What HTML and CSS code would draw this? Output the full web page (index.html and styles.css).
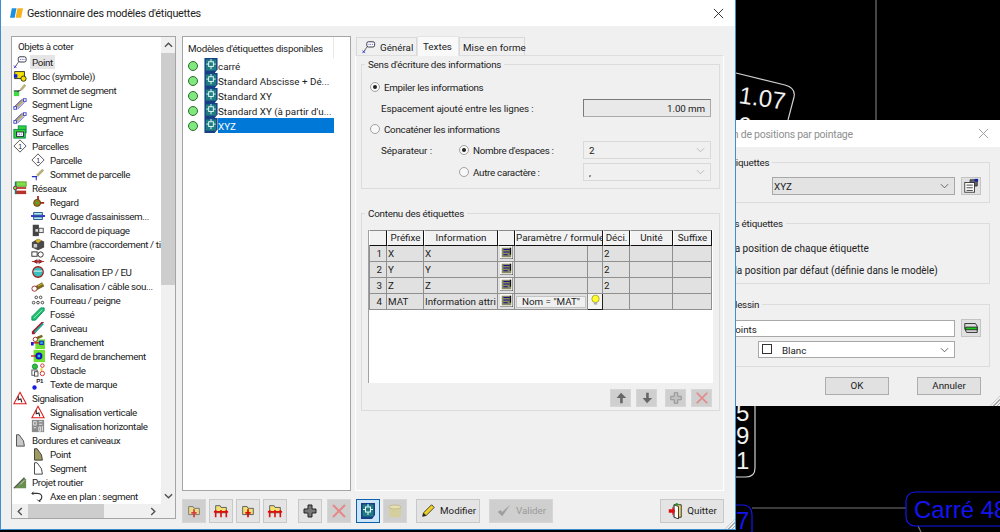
FILE: index.html
```html
<!DOCTYPE html>
<html lang="fr">
<head>
<meta charset="utf-8">
<title>Gestionnaire des modèles d'étiquettes</title>
<link rel="stylesheet" href="styles.css">
</head>
<body>
<svg class="sprite" width="0" height="0" aria-hidden="true">
  <symbol id="i-point" viewBox="0 0 16 16"><path d="M2 14 L7 7" stroke="#555" fill="none"/><path d="M1 12l3 3M4 12l-3 3" stroke="#3a3ad0"/><rect x="6" y="2" width="9" height="6" rx="2" fill="#fff" stroke="#223"/><path d="M8 5h5" stroke="#3a3ad0" stroke-dasharray="1 1"/></symbol>
  <symbol id="i-bloc" viewBox="0 0 16 16"><rect x="2" y="3" width="11" height="8" fill="#f6e200" stroke="#222"/><rect x="1" y="6" width="4" height="4" fill="#1020e0"/><circle cx="12" cy="11" r="3" fill="#f6e200" stroke="#222"/></symbol>
  <symbol id="i-sommet" viewBox="0 0 16 16"><rect x="1" y="9" width="6" height="6" fill="#3fdc3f"/><path d="M5 10 L9 8" stroke="#223" /><path d="M9 8 L14 2" stroke="#b8b078" stroke-width="3"/><path d="M1 9h6" stroke="#223"/></symbol>
  <symbol id="i-ligne" viewBox="0 0 16 16"><path d="M2 13 L12 3" stroke="#b8b078" stroke-width="4"/><path d="M2 11 L10 3M5 14 L13 6" stroke="#3a3ad0"/><rect x="1" y="11" width="3" height="3" fill="#fff" stroke="#3a3ad0"/><rect x="12" y="2" width="3" height="3" fill="#fff" stroke="#3a3ad0"/></symbol>
  <symbol id="i-surface" viewBox="0 0 16 16"><rect x="6" y="1" width="9" height="8" fill="#35d435" stroke="#085"/><rect x="1" y="5" width="13" height="10" fill="#35d435" stroke="#085"/><rect x="4" y="8" width="8" height="5" fill="#fff" stroke="#223"/><path d="M5 10.500h6" stroke="#33c" stroke-dasharray="1 1"/></symbol>
  <symbol id="i-spar" viewBox="0 0 16 16"><path d="M1 11h6M6 11v4" stroke="#2030c0" stroke-width="1.200"/><path d="M7 10 L14 3" stroke="#b8b078" stroke-width="3"/></symbol>
  <symbol id="i-reseau" viewBox="0 0 16 16"><rect x="3" y="1" width="12" height="5" fill="#7de04a" stroke="#592"/><rect x="3" y="7" width="12" height="2" fill="#b8322a"/><rect x="3" y="11" width="12" height="4" fill="#b8322a"/><rect x="2" y="1" width="2" height="14" fill="#2a7a7a"/><circle cx="2.500" cy="8" r="2" fill="#7de04a" stroke="#824"/></symbol>
  <symbol id="i-regard" viewBox="0 0 16 16"><path d="M8 1v6M9 9h6" stroke="#b02020" stroke-width="2"/><circle cx="7" cy="9" r="4" fill="#a07a10" stroke="#504010"/><circle cx="7" cy="9" r="1.500" fill="#3cb040"/></symbol>
  <symbol id="i-ouvrage" viewBox="0 0 16 16"><path d="M0 8h16" stroke="#1a1ae0" stroke-width="2"/><path d="M3 4h10v3H3zM3 9h10v3H3z" fill="#aaf0f0" stroke="#204080"/></symbol>
  <symbol id="i-raccord" viewBox="0 0 16 16"><rect x="2" y="2" width="7" height="13" fill="#444"/><rect x="9" y="6" width="5" height="5" fill="#eee" stroke="#444"/><path d="M5 7h3v3H5z" fill="#ddd"/></symbol>
  <symbol id="i-chambre" viewBox="0 0 16 16"><path d="M1 6 L8 2 L15 5 V12 L8 15 L1 12Z" fill="#4a4a4a"/><path d="M5 4.500 L8 2 L12 4 L8 7Z" fill="#d8b020"/><rect x="3" y="8" width="4" height="4" fill="#ccc"/></symbol>
  <symbol id="i-access" viewBox="0 0 16 16"><rect x="1" y="1" width="6" height="5" fill="#fff" stroke="#222"/><circle cx="11" cy="4" r="3" fill="#fff" stroke="#222"/><path d="M3 12l4 2v-4zM13 12l-4 2v-4z" fill="#d8a020" stroke="#602"/><path d="M1 12h14" stroke="#b02020"/></symbol>
  <symbol id="i-canal" viewBox="0 0 16 16"><circle cx="8" cy="8" r="6" fill="#38c0c0" stroke="#a02020" stroke-width="1.500"/><path d="M3 7h10" stroke="#fff" stroke-width="1"/></symbol>
  <symbol id="i-cable" viewBox="0 0 16 16"><path d="M5 11 L14 6" stroke="#7a6a20" stroke-width="5"/><path d="M8 8 L14 5" stroke="#e0c840" stroke-width="1"/><circle cx="4" cy="11" r="3" fill="#fff" stroke="#a02020"/></symbol>
  <symbol id="i-fourreau" viewBox="0 0 16 16"><g fill="none" stroke="#333"><circle cx="6" cy="5" r="1.500"/><circle cx="11" cy="5" r="1.500"/><circle cx="3" cy="11" r="1.500"/><circle cx="8" cy="11" r="1.500"/><circle cx="13" cy="11" r="1.500"/></g></symbol>
  <symbol id="i-fosse" viewBox="0 0 16 16"><path d="M1 11 L11 1 H15 V4 L5 15 H1Z" fill="#20c070" stroke="#086"/><path d="M3 13 L13 3" stroke="#9af0b0"/></symbol>
  <symbol id="i-caniveau" viewBox="0 0 16 16"><path d="M1 12 L12 1 H15 L4 15 H1Z" fill="#a02030"/><path d="M4 13 L14 3" stroke="#20b0a0" stroke-width="2"/></symbol>
  <symbol id="i-branch" viewBox="0 0 16 16"><rect x="5" y="5" width="11" height="11" fill="#6ee030"/><path d="M6 4 L13 1" stroke="#7a6a20" stroke-width="3"/><circle cx="5" cy="5" r="2.500" fill="#fff" stroke="#a02020"/><path d="M0 9h14" stroke="#e01010" stroke-width="1.500"/><rect x="0" y="8" width="3" height="4" fill="#1a1ae0"/><rect x="10" y="7" width="4" height="4" fill="#20b0e0" stroke="#11c"/></symbol>
  <symbol id="i-rbranch" viewBox="0 0 16 16"><rect x="3" y="1" width="13" height="14" fill="#6ee030"/><path d="M0 8h6" stroke="#e01010" stroke-width="1.500"/><circle cx="9" cy="8" r="4" fill="#1010c0"/><rect x="7.500" y="6.500" width="3" height="3" fill="#20d0e0"/></symbol>
  <symbol id="i-obst" viewBox="0 0 16 16"><circle cx="4.500" cy="4" r="3" fill="#30c030" stroke="#185"/><rect x="1" y="8" width="6" height="6" fill="#fff" stroke="#444"/><rect x="4" y="10" width="4" height="5" fill="#fff" stroke="#444"/><circle cx="13" cy="3" r="2" fill="#fff" stroke="#d02020"/><circle cx="13" cy="12" r="2.500" fill="#fff" stroke="#d02020"/><path d="M12 6v3" stroke="#e8d000" stroke-width="2"/></symbol>
  <symbol id="i-sign" viewBox="0 0 16 16"><path d="M8 1.500 L15 14.500 H1Z" fill="#fff" stroke="#e01818" stroke-width="1.200"/><path d="M6 6 L6 10 L9 9 L10 13" fill="none" stroke="#222" stroke-width="1.300"/></symbol>
  <symbol id="i-shor" viewBox="0 0 16 16"><rect x="1" y="1" width="14" height="14" fill="#8a8a8a"/><path d="M3 3h3v4H3zM9 3h4M9 6h4M3 10h3M9 9h2v5H9zM13 8v6" fill="none" stroke="#eee"/></symbol>
  <symbol id="i-bord" viewBox="0 0 16 16"><path d="M4 2h3l5 7 1 6H4Z" fill="#c8c8c8" stroke="#444"/></symbol>
  <symbol id="i-bpoint" viewBox="0 0 16 16"><path d="M4 2h3l5 7 1 6H4Z" fill="#a09a60" stroke="#333"/></symbol>
  <symbol id="i-bseg" viewBox="0 0 16 16"><path d="M4 2h3l5 7 1 6H4Z" fill="#fff" stroke="#333"/></symbol>
  <symbol id="i-route" viewBox="0 0 16 16"><path d="M1 15 L13 3 L15 5 V15Z" fill="#6a9050"/><path d="M1 15 L13 3" stroke="#555" stroke-width="1.500"/><path d="M8 11 L13 6" stroke="#ddd"/></symbol>
  <symbol id="i-axe" viewBox="0 0 16 16"><path d="M1 5h6c5 0 6 3 5 6l-3 3" fill="none" stroke="#333" stroke-width="1.300"/><path d="M3 3l-2 2 2 2M7 12l2 2 2 0" fill="none" stroke="#333"/></symbol>
  <symbol id="i-chip" viewBox="0 0 14 16"><path d="M0 0h14v12l-3 4H0Z" fill="#173f86"/><rect x="1.500" y="1.500" width="11" height="12" fill="#1f7d82"/><rect x="4.500" y="4" width="5" height="5" fill="none" stroke="#e8fbfb"/><path d="M7 1v3M7 9v3M2 6.500h2.500M9.500 6.500H12" stroke="#e8fbfb"/></symbol>
  <symbol id="i-fold" viewBox="0 0 18 18"><path d="M3 4h5l1 2h6v7H3Z" fill="#f2e070" stroke="#555"/><path d="M9 7v9M6 11h6" stroke="#d81010" stroke-width="2"/></symbol>
  <symbol id="i-folds" viewBox="0 0 18 18"><path d="M3 3h5l1 2h6v6H3Z" fill="#f2e070" stroke="#555"/><path d="M1 10h16M3 8v8M9 8v8M15 8v8" stroke="#d81010" stroke-width="1.800"/></symbol>
  <symbol id="i-plus" viewBox="0 0 16 16"><path d="M6 2h4v4h4v4h-4v4H6v-4H2V6h4Z" fill="#777" stroke="#222"/></symbol>
  <symbol id="i-x" viewBox="0 0 16 16"><path d="M2 2 L14 14 M14 2 L2 14" stroke="#ee7070" stroke-width="2"/></symbol>
  <symbol id="i-disk" viewBox="0 0 16 16"><path d="M2 4v9c0 2 12 2 12 0V4Z" fill="#d8d090"/><ellipse cx="8" cy="4" rx="6" ry="2" fill="#eee5a8" stroke="#bdb57a"/></symbol>
  <symbol id="i-pencil" viewBox="0 0 18 18"><path d="M3 15 L4 11 L13 2 L16 5 L7 14Z" fill="#f0d020" stroke="#333"/><path d="M3 15l1-4 3 3Z" fill="#222"/></symbol>
  <symbol id="i-check" viewBox="0 0 18 18"><path d="M2 10 L7 15 L16 2 L7 10 L5 8Z" fill="#8f8f8f"/></symbol>
  <symbol id="i-quit" viewBox="0 0 18 18"><path d="M8 2h8v14H8Z" fill="#f6e070" stroke="#222"/><path d="M8 2l5 2v14l-5-2Z" fill="#fff" stroke="#222"/><path d="M1 7h4V4l3 5-3 5v-3H1Z" fill="#e01010" transform="translate(1 0)"/><circle cx="11" cy="1.500" r="1.500" fill="#20a020"/></symbol>
  <symbol id="i-up" viewBox="0 0 16 16"><path d="M8 2 L14 8 H10 V14 H7 V8 H3Z" fill="#444"/></symbol>
  <symbol id="i-down" viewBox="0 0 16 16"><path d="M8 14 L14 8 H10 V2 H7 V8 H3Z" fill="#444"/></symbol>
  <symbol id="i-plusg" viewBox="0 0 16 16"><path d="M6 2h4v4h4v4h-4v4H6v-4H2V6h4Z" fill="#bbb" stroke="#777"/></symbol>
  <symbol id="i-info" viewBox="0 0 15 15"><rect width="15" height="15" fill="#f8f8f8"/><rect x="2" y="2" width="11" height="11" fill="#8a8a60"/><path d="M4 4h7M4 7h7M4 10h5" stroke="#101090" stroke-width="1.200"/><path d="M12 2v8" stroke="#111" stroke-width="1.500"/><path d="M15 0v15H0" stroke="#222" fill="none"/></symbol>
  <symbol id="i-bulb" viewBox="0 0 14 16"><circle cx="7" cy="6" r="4.500" fill="#ffff30" stroke="#a09a20"/><rect x="5" y="10" width="4" height="3" fill="#aaa"/></symbol>
  <symbol id="i-form" viewBox="0 0 20 18"><rect x="3" y="5" width="11" height="11" fill="#fff" stroke="#333"/><path d="M5 8h7M5 11h7M5 14h7" stroke="#333"/><path d="M9 2h8v7h-3V5H9Z" fill="#667" stroke="#333"/><rect x="14" y="1" width="4" height="3" fill="#1020a0"/></symbol>
  <symbol id="i-layer" viewBox="0 0 20 18"><path d="M3 4h12l2 3v7H5L3 10Z" fill="#ddd" stroke="#222"/><path d="M4 8h13v3H4Z" fill="#18d018" stroke="#222"/></symbol>
</svg>

<div class="desktop">
  <svg class="cad" viewBox="0 0 1000 532" width="1000" height="532">
    <path d="M876 0V120" stroke="#8a8a8a"/>
    <path d="M736 73 L785 85 Q796 88 794 97 L788 120" fill="none" stroke="#cfcfcf" stroke-width="1.200"/>
    <text class="cad-white" x="738" y="103" transform="rotate(8 738 103)">1.07</text>
    <text class="cad-white" x="737" y="133" transform="rotate(8 737 133)">9.29</text>
    <path d="M755 400V468Q755 477 746 477H736" fill="none" stroke="#cfcfcf" stroke-width="1.200"/>
    <text class="cad-white" x="736" y="421">5</text>
    <text class="cad-white" x="736" y="444">9</text>
    <text class="cad-white" x="736" y="469">1</text>
    <path d="M752 508H906M918 526l3 6" stroke="#777" stroke-width="1.200" fill="none"/>
    <path d="M736 505H742Q752 505 752 515V532" fill="none" stroke="#1414ee" stroke-width="1.200"/>
    <text class="cad-blue" x="736" y="529">7</text>
    <rect x="906" y="492" width="120" height="34" rx="9" fill="none" stroke="#1414ee" stroke-width="1.200"/>
    <text class="cad-blue" x="914" y="518">Carré 48</text>
  </svg>

  <section class="window back">
    <header class="titlebar inactive"><span class="title-text">Création de positions par pointage</span><svg class="close" viewBox="0 0 12 12"><path d="M1 1 L11 11M11 1 L1 11"/></svg></header>
    <div class="back-body">
      <fieldset class="group"><legend>Modèle d'étiquettes</legend>
        <div class="row-end">
          <div class="select grey w183"><b>XYZ</b><svg class="chev" viewBox="0 0 10 6"><path d="M1 1l4 4 4-4"/></svg></div>
          <button class="side-btn"><svg viewBox="0 0 20 18"><use href="#i-form"/></svg></button>
        </div>
      </fieldset>
      <fieldset class="group"><legend>Position des étiquettes</legend>
        <div class="back-rows">
          <label class="radio-row"><span class="radio"></span>Définir la position de chaque étiquette</label>
          <label class="radio-row"><span class="radio"></span>Utiliser la position par défaut (définie dans le modèle)</label>
        </div>
      </fieldset>
      <fieldset class="group"><legend>Calque du dessin</legend>
        <div class="layer-rows">
          <div class="row-end">
            <div class="text-field w265">Calque points</div>
            <button class="side-btn"><svg viewBox="0 0 20 18"><use href="#i-layer"/></svg></button>
          </div>
          <div class="row-end">
            <div class="select white w197"><span class="swatch"></span><span>Blanc</span><svg class="chev" viewBox="0 0 10 6"><path d="M1 1l4 4 4-4"/></svg></div>
            <span class="side-space"></span>
          </div>
        </div>
      </fieldset>
      <div class="back-actions"><button class="push">OK</button><button class="push">Annuler</button></div>
    </div>
    <span class="grip"></span>
  </section>

  <section class="window main">
    <header class="titlebar">
      <svg class="logo" viewBox="0 0 14 10"><path d="M2 0h5L5 10H0Z" fill="#1b8fe0"/><path d="M8 0h6l-2 10H6Z" fill="#f6b31c"/></svg>
      <span class="title-text">Gestionnaire des modèles d'étiquettes</span>
      <svg class="close dark" viewBox="0 0 12 12"><path d="M1 1 L11 11M11 1 L1 11"/></svg>
    </header>
    <div class="main-body">
      <div class="tree-panel">
        <div class="tree">
          <div class="tree-head">Objets à coter</div>
          <ul class="tree-list">
            <li class="l0"><svg><use href="#i-point"/></svg><span class="hl">Point</span></li>
            <li class="l0"><svg><use href="#i-bloc"/></svg><span>Bloc (symbole))</span></li>
            <li class="l0"><svg><use href="#i-sommet"/></svg><span>Sommet de segment</span></li>
            <li class="l0"><svg><use href="#i-ligne"/></svg><span>Segment Ligne</span></li>
            <li class="l0"><svg><use href="#i-ligne"/></svg><span>Segment Arc</span></li>
            <li class="l0"><svg><use href="#i-surface"/></svg><span>Surface</span></li>
            <li class="l0"><svg viewBox="0 0 16 16"><path d="M8 1 L15 8 L8 15 L1 8Z" fill="#fff" stroke="#444"/><text class="ico-num" x="8" y="11">1</text></svg><span>Parcelles</span></li>
            <li class="l1"><svg viewBox="0 0 16 16"><path d="M8 1 L15 8 L8 15 L1 8Z" fill="#fff" stroke="#444"/><text class="ico-num" x="8" y="11">1</text></svg><span>Parcelle</span></li>
            <li class="l1"><svg><use href="#i-spar"/></svg><span>Sommet de parcelle</span></li>
            <li class="l0"><svg><use href="#i-reseau"/></svg><span>Réseaux</span></li>
            <li class="l1"><svg><use href="#i-regard"/></svg><span>Regard</span></li>
            <li class="l1"><svg><use href="#i-ouvrage"/></svg><span>Ouvrage d'assainissem...</span></li>
            <li class="l1"><svg><use href="#i-raccord"/></svg><span>Raccord de piquage</span></li>
            <li class="l1"><svg><use href="#i-chambre"/></svg><span>Chambre (raccordement / tirage)</span></li>
            <li class="l1"><svg><use href="#i-access"/></svg><span>Accessoire</span></li>
            <li class="l1"><svg><use href="#i-canal"/></svg><span>Canalisation EP / EU</span></li>
            <li class="l1"><svg><use href="#i-cable"/></svg><span>Canalisation / câble sou...</span></li>
            <li class="l1"><svg><use href="#i-fourreau"/></svg><span>Fourreau / peigne</span></li>
            <li class="l1"><svg><use href="#i-fosse"/></svg><span>Fossé</span></li>
            <li class="l1"><svg><use href="#i-caniveau"/></svg><span>Caniveau</span></li>
            <li class="l1"><svg><use href="#i-branch"/></svg><span>Branchement</span></li>
            <li class="l1"><svg><use href="#i-rbranch"/></svg><span>Regard de branchement</span></li>
            <li class="l1"><svg><use href="#i-obst"/></svg><span>Obstacle</span></li>
            <li class="l1"><svg viewBox="0 0 16 16"><circle cx="4" cy="12" r="2.500" fill="#1a1ae0"/><text class="ico-mark" x="6" y="7">P1</text></svg><span>Texte de marque</span></li>
            <li class="l0"><svg><use href="#i-sign"/></svg><span>Signalisation</span></li>
            <li class="l1"><svg><use href="#i-sign"/></svg><span>Signalisation verticale</span></li>
            <li class="l1"><svg><use href="#i-shor"/></svg><span>Signalisation horizontale</span></li>
            <li class="l0"><svg><use href="#i-bord"/></svg><span>Bordures et caniveaux</span></li>
            <li class="l1"><svg><use href="#i-bpoint"/></svg><span>Point</span></li>
            <li class="l1"><svg><use href="#i-bseg"/></svg><span>Segment</span></li>
            <li class="l0"><svg><use href="#i-route"/></svg><span>Projet routier</span></li>
            <li class="l1"><svg><use href="#i-axe"/></svg><span>Axe en plan : segment</span></li>
          </ul>
        </div>
        <div class="vscroll">
          <svg class="arrow" viewBox="0 0 10 6"><path d="M1 5l4-4 4 4"/></svg>
          <div class="vtrack"><div class="vthumb"></div></div>
          <svg class="arrow" viewBox="0 0 10 6"><path d="M1 1l4 4 4-4"/></svg>
        </div>
        <div class="hscroll">
          <svg class="arrow-h" viewBox="0 0 6 10"><path d="M5 1L1 5l4 4"/></svg>
          <div class="htrack"><div class="hthumb"></div></div>
          <svg class="arrow-h" viewBox="0 0 6 10"><path d="M1 1l4 4-4 4"/></svg>
        </div>
        <div class="corner"></div>
      </div>

      <div class="work">
        <div class="work-top">
          <div class="models">
            <div class="models-inner">
              <div class="models-head">Modèles d'étiquettes disponibles</div>
              <div class="model"><span class="dot"></span><svg class="chip"><use href="#i-chip"/></svg><span class="model-name">carré</span></div>
              <div class="model"><span class="dot"></span><svg class="chip"><use href="#i-chip"/></svg><span class="model-name">Standard Abscisse + Dé...</span></div>
              <div class="model"><span class="dot"></span><svg class="chip"><use href="#i-chip"/></svg><span class="model-name">Standard XY</span></div>
              <div class="model"><span class="dot"></span><svg class="chip"><use href="#i-chip"/></svg><span class="model-name">Standard XY (à partir d'u...</span></div>
              <div class="model selected"><span class="dot"></span><svg class="chip"><use href="#i-chip"/></svg><span class="model-name">XYZ</span></div>
            </div>
          </div>

          <div class="tabs">
            <div class="tab-strip">
              <div class="tab w-general"><svg class="tab-ico"><use href="#i-point"/></svg>Général</div>
              <div class="tab active w-textes">Textes</div>
              <div class="tab w-forme">Mise en forme</div>
            </div>
            <div class="tab-panel">
              <fieldset class="group"><legend>Sens d'écriture des informations</legend>
                <div class="sens">
                  <label class="radio-row"><span class="radio on"></span>Empiler les informations</label>
                  <div class="sub-row"><span>Espacement ajouté entre les lignes :</span><div class="num-field">1.00 mm</div></div>
                  <label class="radio-row"><span class="radio"></span>Concaténer les informations</label>
                  <div class="sub-row"><span class="sep-label">Séparateur :</span><label class="radio-row sep-radio"><span class="radio on"></span>Nombre d'espaces :</label><div class="select pale"><span>2</span><svg class="chev light" viewBox="0 0 10 6"><path d="M1 1l4 4 4-4"/></svg></div></div>
                  <div class="sub-row tight"><span class="sep-label"></span><label class="radio-row sep-radio"><span class="radio"></span>Autre caractère :</label><div class="select pale"><span>,</span><svg class="chev light" viewBox="0 0 10 6"><path d="M1 1l4 4 4-4"/></svg></div></div>
                </div>
              </fieldset>
              <fieldset class="group second"><legend>Contenu des étiquettes</legend>
                <div class="grid-wrap">
                  <table class="grid">
                    <colgroup><col class="c18"><col class="c37"><col class="c74"><col class="c17"><col class="c73"><col class="c15"><col class="c27"><col class="c43"><col class="c39"></colgroup>
                    <thead><tr><th></th><th>Préfixe</th><th>Information</th><th></th><th colspan="2">Paramètre / formule</th><th>Déci.</th><th>Unité</th><th>Suffixe</th></tr></thead>
                    <tbody>
                      <tr><td class="num">1</td><td>X</td><td>X</td><td class="ic"><svg><use href="#i-info"/></svg></td><td></td><td></td><td>2</td><td></td><td></td></tr>
                      <tr><td class="num">2</td><td>Y</td><td>Y</td><td class="ic"><svg><use href="#i-info"/></svg></td><td></td><td></td><td>2</td><td></td><td></td></tr>
                      <tr><td class="num">3</td><td>Z</td><td>Z</td><td class="ic"><svg><use href="#i-info"/></svg></td><td></td><td></td><td>2</td><td></td><td></td></tr>
                      <tr><td class="num">4</td><td>MAT</td><td>Information attri</td><td class="ic"><svg><use href="#i-info"/></svg></td><td class="formula"><span>Nom = "MAT"</span></td><td class="ic bulb"><svg><use href="#i-bulb"/></svg></td><td></td><td></td><td></td></tr>
                    </tbody>
                  </table>
                </div>
                <div class="grid-tools">
                  <button class="tbtn off small"><svg><use href="#i-up"/></svg></button>
                  <button class="tbtn off small"><svg><use href="#i-down"/></svg></button>
                  <button class="tbtn off small push-left"><svg><use href="#i-plusg"/></svg></button>
                  <button class="tbtn off small"><svg><use href="#i-x"/></svg></button>
                </div>
              </fieldset>
            </div>
          </div>
        </div>

        <div class="toolbar">
          <div class="tool-group">
            <button class="tbtn off"><svg><use href="#i-fold"/></svg></button>
            <button class="tbtn"><svg><use href="#i-folds"/></svg></button>
            <button class="tbtn"><svg><use href="#i-fold"/></svg></button>
            <button class="tbtn"><svg><use href="#i-folds"/></svg></button>
          </div>
          <div class="tool-group wide">
            <button class="tbtn"><svg><use href="#i-plus"/></svg></button>
            <button class="tbtn off"><svg><use href="#i-x"/></svg></button>
          </div>
          <div class="tool-group narrow">
            <button class="tbtn pressed"><svg><use href="#i-chip"/></svg></button>
            <button class="tbtn off"><svg><use href="#i-disk"/></svg></button>
          </div>
          <button class="tbtn label"><svg><use href="#i-pencil"/></svg>Modifier</button>
          <button class="tbtn label off dim"><svg><use href="#i-check"/></svg>Valider</button>
          <button class="tbtn label quit"><svg><use href="#i-quit"/></svg>Quitter</button>
        </div>
      </div>
    </div>
    <span class="grip"></span>
  </section>
</div>
</body>
</html>
```

FILE: styles.css
```css
* { box-sizing: border-box; }
html, body { margin: 0; padding: 0; }
body { width: 1000px; height: 532px; overflow: hidden; background: #000; font: 9.800px/14px Roboto, sans-serif; color: #222; }
.sprite { position: absolute; }
.desktop { position: relative; width: 1000px; height: 532px; overflow: hidden; }
.cad { position: absolute; left: 0; top: 0; }
.cad-white { fill: #f0f0f0; font: 24px "Liberation Sans", sans-serif; }
.cad-blue { fill: #1414ee; font: 24px "Liberation Sans", sans-serif; }
.ico-num { font: 8px "Liberation Sans", sans-serif; text-anchor: middle; fill: #224; }
.ico-mark { font: 700 7px "Liberation Sans", sans-serif; fill: #222; }

.window { position: absolute; background: #f0f0f0; }
.main { left: 0; top: 0; width: 736px; height: 530px; border: 1px solid #3d8fd0; border-top: 0; }
.back { left: 671px; top: 120px; width: 329px; height: 286px; }

.titlebar { display: flex; align-items: center; height: 26px; background: #fff; padding: 2px 11px 0 26px; font-size: 10.800px; letter-spacing: -0.25px; position: relative; }
.titlebar.inactive { height: 27px; color: #8f8f8f; padding-left: 30px; justify-content: space-between; font-size: 10.500px; }
.logo { width: 13px; height: 10px; position: absolute; left: 9px; top: 8px; }
.close { width: 11px; height: 11px; fill: none; stroke: #999; stroke-width: 1; margin-top: -2px; }
.close.dark { stroke: #222; margin-left: auto; }
.grip { position: absolute; right: 0; bottom: 0; width: 10px; height: 10px; background: repeating-linear-gradient(135deg, transparent 0 1.5px, #a8a8a8 1.5px 2.5px); clip-path: polygon(100% 0, 100% 100%, 0 100%); }

.main-body { display: flex; gap: 6px; padding: 10px 10px 0; }

.tree-panel { width: 165px; height: 483px; border: 1px solid #a5a5a5; display: grid; grid-template-columns: 149px 14px; grid-template-rows: 467px 14px; background: #f0f0f0; }
.tree { background: #fff; overflow: hidden; letter-spacing: -0.38px; }
.tree-head { height: 18px; line-height: 20px; padding-left: 6px; }
.tree-list { list-style: none; margin: 0; padding: 0; }
.tree-list li { display: flex; align-items: flex-start; height: 14px; line-height: 16px; white-space: nowrap; }
.tree-list svg { width: 14px; height: 14px; flex: none; margin-right: 5px; overflow: visible; }
.tree-list .l0 { padding-left: 1px; }
.tree-list .l1 { padding-left: 19px; }
.hl { background: #e5e5e5; margin-left: -2px; padding: 0 2px; height: 14px; }

.vscroll { display: flex; flex-direction: column; align-items: center; background: #f0f0f0; }
.arrow { width: 9px; height: 16px; padding: 5px 0; flex: none; fill: none; stroke: #505050; stroke-width: 1.500; }
.vtrack { flex: 1; width: 100%; }
.vthumb { height: 232px; background: #cdcdcd; }
.hscroll { display: flex; align-items: center; background: #f0f0f0; }
.arrow-h { width: 16px; height: 9px; flex: none; fill: none; stroke: #505050; stroke-width: 1.500; }
.htrack { flex: 1; height: 100%; }
.hthumb { width: 76px; height: 100%; background: #cdcdcd; }
.corner { background: #f0f0f0; }

.work { width: 542px; display: flex; flex-direction: column; }
.work-top { display: flex; gap: 4px; height: 455px; }
.models { width: 169px; background: #fff; border: 1px solid #a5a5a5; }
.models-inner { width: 151px; }
.models-head { height: 21px; line-height: 23px; padding-left: 5px; white-space: nowrap; border-right: 1px solid #e8e8e8; letter-spacing: -0.25px; }
.model { display: flex; align-items: flex-start; height: 15px; white-space: nowrap; }
.dot { width: 10px; height: 10px; border-radius: 50%; background: #7fe87f; border: 1px solid #2d6a2d; margin: 3px 0 0 5px; flex: none; }
.chip { width: 14px; height: 15px; margin-left: 6px; flex: none; }
.model-name { flex: 1; height: 15px; line-height: 17px; }
.selected .model-name { background: #0078d7; color: #fff; }

.tabs { width: 369px; display: flex; flex-direction: column; }
.tab-strip { display: flex; height: 19px; padding-left: 1px; position: relative; z-index: 1; }
.tab { height: 18px; margin-top: 1px; padding-top: 2px; border: 1px solid #d9d9d9; border-bottom: 0; background: #f0f0f0; display: flex; align-items: center; padding-left: 21px; white-space: nowrap; }
.tab.active { height: 20px; margin-top: 0; background: #f9f9f9; padding-left: 5px; padding-top: 0; border-color: #e4e4e4; }
.w-general { width: 61px; padding-left: 4px; }
.tab-ico { width: 15px; height: 14px; margin: -2px 4px 0 0; flex: none; }
.w-textes { width: 42px; }
.tab.w-forme { width: 66px; padding-left: 3px; }
.tab-panel { height: 436px; border: 1px solid #fff; border-top-color: #dedede; padding: 1px 3px 0 5px; }

.group { margin: 0; padding: 0; border: 1px solid #dcdcdc; min-width: 0; }
.group legend { padding: 0 3px; margin-left: 3px; height: 14px; line-height: 16px; white-space: nowrap; letter-spacing: -0.22px; }
.group.second { margin-top: 17px; padding: 10px 6px 3px; }
.group.second legend { margin-left: -3px; }

.sens { display: flex; flex-direction: column; gap: 3px; padding: 7px 8px 7px 8px; }
.sens .radio-row { letter-spacing: -0.28px; }
.radio-row { display: flex; align-items: flex-start; height: 18px; line-height: 20px; white-space: nowrap; }
.radio { width: 10px; height: 10px; flex: none; border-radius: 50%; border: 1px solid #a2a2a2; background: #f8f8f8; margin: 4px 4px 0 0; position: relative; }
.radio.on::after { content: ""; position: absolute; left: 2px; top: 2px; width: 4px; height: 4px; border-radius: 50%; background: #222; }
.sub-row { display: flex; align-items: flex-start; height: 18px; line-height: 20px; padding-left: 11px; white-space: nowrap; letter-spacing: -0.11px; }
.sub-row.tight { margin-top: 1px; }
.sep-label { width: 78px; flex: none; }
.sep-radio { width: 124px; flex: none; }
.num-field { margin-left: auto; width: 128px; height: 18px; border: 1px solid #7a7a7a; border-right-color: #aaa; border-bottom-color: #aaa; background: #e9e9e9; text-align: right; padding-right: 5px; line-height: 18px; }

.select { display: flex; align-items: flex-start; height: 18px; line-height: 18px; border: 1px solid #c8c8c8; position: relative; padding-left: 5px; }
.select .chev { position: absolute; right: 5px; top: 5px; }
.chev { width: 9px; height: 6px; fill: none; stroke: #555; stroke-width: 1; }
.chev.light { stroke: #b5b5b5; }
.select.pale { width: 128px; margin-left: auto; background: #f0f0f0; border-color: #d9d9d9; }
.select.grey { background: #e3e3e3; border-color: #a8a8a8; padding-left: 1px; }
.select.grey b { font-weight: 400; }
.select.white { background: #fff; border-color: #a8a8a8; padding-left: 3px; height: 17px; line-height: 17px; }
.w183 { width: 183px; }
.w197 { width: 197px; }
.w265 { width: 265px; }
.swatch { width: 10px; height: 10px; border: 1px solid #333; background: #fff; margin: 2px 10px 0 0; }

.grid-wrap { height: 153px; background: #fff; border-left: 1px solid #a0a0a0; }
.grid { border-collapse: separate; border-spacing: 0; table-layout: fixed; width: 343px; }
.c18 { width: 18px; } .c37 { width: 37px; } .c74 { width: 74px; } .c17 { width: 17px; }
.c73 { width: 73px; } .c15 { width: 15px; } .c27 { width: 27px; } .c43 { width: 43px; } .c39 { width: 39px; }
.grid th { height: 16px; font-weight: 400; background: #f2f2f2; border: 1px solid #888; border-top-color: #8a8a8a; border-left-color: #fff; border-right: 1px solid #111; border-bottom: 1px solid #111; padding: 0; white-space: nowrap; overflow: hidden; }
.grid td { height: 16px; background: #e1e1e1; border-right: 1px solid #8f8f8f; border-bottom: 1px solid #8f8f8f; padding: 0 0 0 1px; white-space: nowrap; overflow: hidden; line-height: 14px; }
.grid td:first-child { border-left: 1px solid #8f8f8f; }
.grid td.num { text-align: right; padding-right: 4px; }
.grid td.ic { padding: 0; text-align: center; }
.grid .ic svg { width: 13px; height: 13px; vertical-align: -2px; }
.grid .bulb { background: #f4f4f4; border-right-color: #222; border-bottom-color: #222; }
.grid .formula { padding: 1px; }
.grid .formula span { display: block; background: #f0f0f0; border: 1px solid #c4c4c4; box-sizing: content-box; height: 10px; line-height: 10px; text-align: center; }

.grid-tools { display: flex; justify-content: flex-end; gap: 5px; padding: 6px 1px 0 0; }
.tbtn { width: 24px; height: 24px; padding: 0; border: 1px solid #c8c8c8; background: #e4e4e4; display: flex; align-items: center; justify-content: center; font: inherit; color: inherit; flex: none; }
.tbtn svg { width: 16px; height: 16px; flex: none; }
.tbtn.off { background: #cfcfcf; border-color: #d6d6d6; }
.tbtn.off svg { opacity: 0.75; }
.tbtn.small { width: 21px; height: 18px; }
.tbtn.small svg { width: 14px; height: 14px; }
.tbtn.push-left { margin-left: 3px; }
.tbtn.pressed { background: #cce4f7; border: 1px solid #0a62ad; }

.toolbar { display: flex; align-items: flex-start; margin-top: 8px; height: 24px; }
.tool-group { display: flex; gap: 3px; }
.tool-group.wide { gap: 5px; margin-left: 11px; }
.tool-group.narrow { margin-left: 5px; gap: 3px; margin-right: 9px; }
.tbtn.label { width: 64px; gap: 4px; }
.tbtn.dim { margin-left: 9px; color: #9a9a9a; }
.tbtn.quit { margin-left: auto; }

.back-body { padding: 8px 10px 0 10px; }
.back-body .group + .group { margin-top: 13px; }
.row-end { display: flex; justify-content: flex-end; align-items: center; gap: 6px; padding-right: 8px; }
.back-body .group:first-child .row-end { padding-top: 8px; padding-bottom: 7px; }
.side-btn { width: 20px; height: 18px; padding: 0; background: #e1e1e1; border: 1px solid #c4c4c4; display: flex; align-items: center; justify-content: center; }
.side-btn svg { width: 18px; height: 16px; }
.side-space { width: 20px; flex: none; }
.text-field { height: 17px; background: #fff; border: 1px solid #a8a8a8; padding-left: 6px; line-height: 17px; }
.back-rows { display: flex; flex-direction: column; gap: 4px; padding: 9px 0 4px 5px; font-size: 10px; }
.layer-rows { display: flex; flex-direction: column; gap: 4px; padding: 8px 0 8px; }
.back-actions { display: flex; justify-content: flex-end; gap: 28px; margin-top: 10px; padding-right: 9px; }
.push { width: 64px; height: 18px; padding: 0; background: #e1e1e1; border: 1px solid #adadad; font: inherit; color: inherit; }
```
